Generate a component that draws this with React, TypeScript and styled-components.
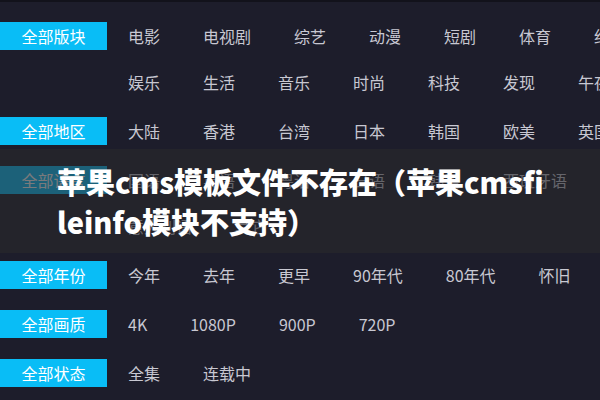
import React from 'react'
import styled, { createGlobalStyle } from 'styled-components'

const GlobalStyle = createGlobalStyle`
  html, body {
    margin: 0;
    padding: 0;
    width: 600px;
    height: 400px;
    overflow: hidden;
    background: #1d1d2b;
  }
  body {
    font-family: "Noto Sans CJK SC", "Noto Sans", sans-serif;
  }
`

type Group = { label: string; items: string[] }

const groups: Group[] = [
  {
    label: '全部版块',
    items: ['电影', '电视剧', '综艺', '动漫', '短剧', '体育', '纪录片', '娱乐', '生活', '音乐', '时尚', '科技', '发现', '午夜'],
  },
  { label: '全部地区', items: ['大陆', '香港', '台湾', '日本', '韩国', '欧美', '英国'] },
  { label: '全部语言', items: ['国语', '英语', '粤语', '日语', '韩语', '西班牙语', '意大利语', '其它'] },
  { label: '全部年份', items: ['今年', '去年', '更早', '90年代', '80年代', '怀旧'] },
  { label: '全部画质', items: ['4K', '1080P', '900P', '720P'] },
  { label: '全部状态', items: ['全集', '连载中'] },
]

export default function App() {
  return (
    <>
      <GlobalStyle />
      <Page>
        <Filters>
          {groups.map((g) => (
            <FilterRow key={g.label}>
              <Label>{g.label}</Label>
              <Options>
                {g.items.map((it) => (
                  <Option key={it}>{it}</Option>
                ))}
              </Options>
            </FilterRow>
          ))}
        </Filters>
        <TitleBand>
          <Title>苹果cms模板文件不存在（苹果cmsfileinfo模块不支持）</Title>
        </TitleBand>
      </Page>
    </>
  )
}

const Page = styled.div`
  position: relative;
  width: 600px;
  height: 400px;
  overflow: hidden;
  background: #1d1d2b;
  border-top: 2px solid #12121b;
  box-sizing: border-box;
`

const Filters = styled.div`
  display: flex;
  flex-direction: column;
  gap: 21px;
  padding-top: 20px;
`

const FilterRow = styled.div`
  display: flex;
  align-items: flex-start;
`

const Label = styled.div`
  flex: 0 0 107px;
  height: 28px;
  line-height: 28px;
  background: #09bdf6;
  color: #ffffff;
  font-size: 16px;
  text-align: center;
`

const Options = styled.div`
  display: flex;
  flex-wrap: wrap;
  flex: 0 0 520px;
  margin-left: 21px;
  column-gap: 43px;
  row-gap: 18px;
`

const Option = styled.span`
  height: 28px;
  line-height: 28px;
  font-size: 16px;
  color: #c8c8d2;
  white-space: nowrap;
`

const TitleBand = styled.div`
  position: absolute;
  left: 0;
  right: 0;
  top: 147px;
  height: 104px;
  background: rgba(40, 40, 44, 0.62);
  box-sizing: border-box;
  padding: 12px 0 0 57px;
`

const Title = styled.h1`
  margin: 0;
  width: 488px;
  font-size: 29px;
  font-weight: 900;
  line-height: 40px;
  color: #ffffff;
  word-break: break-all;
`
